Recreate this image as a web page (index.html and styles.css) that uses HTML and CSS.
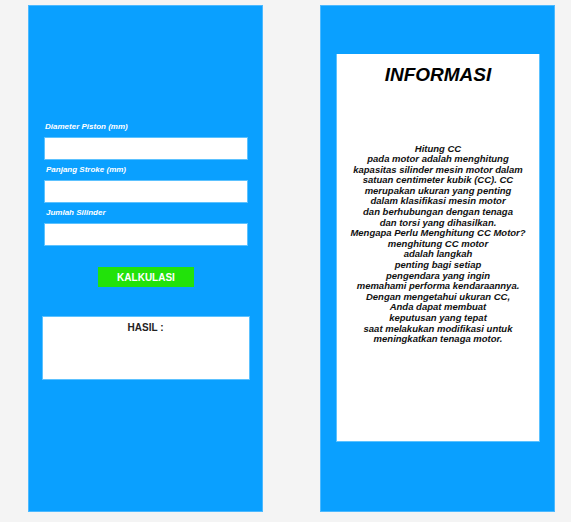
FILE: index.html
```html
<!DOCTYPE html>
<html lang="id">
<head>
<meta charset="utf-8">
<title>Kalkulator CC Motor</title>
<link rel="stylesheet" href="styles.css">
</head>
<body>
<div class="page">
  <section class="panel calc">
    <form class="form">
      <label class="label" for="d">Diameter Piston (mm)</label>
      <input class="field" id="d" type="text">
      <label class="label l2" for="s">Panjang Stroke (mm)</label>
      <input class="field" id="s" type="text">
      <label class="label l3" for="n">Jumlah Silinder</label>
      <input class="field" id="n" type="text">
      <button class="btn" type="button">KALKULASI</button>
    </form>
    <div class="result">
      <div class="result-title">HASIL :</div>
    </div>
  </section>
  <section class="panel info">
    <div class="info-box">
      <h2 class="info-title">INFORMASI</h2>
      <p class="info-text">Hitung CC<br>pada motor adalah menghitung<br>kapasitas silinder mesin motor dalam<br>satuan centimeter kubik (CC). CC<br>merupakan ukuran yang penting<br>dalam klasifikasi mesin motor<br>dan berhubungan dengan tenaga<br>dan torsi yang dihasilkan.<br>Mengapa Perlu Menghitung CC Motor?<br>menghitung CC motor<br>adalah langkah<br>penting bagi setiap<br>pengendara yang ingin<br>memahami performa kendaraannya.<br>Dengan mengetahui ukuran CC,<br>Anda dapat membuat<br>keputusan yang tepat<br>saat melakukan modifikasi untuk<br>meningkatkan tenaga motor.</p>
    </div>
  </section>
</div>
</body>
</html>
```

FILE: styles.css
```css
html, body {
  margin: 0;
  padding: 0;
  background: #f4f4f4;
  font-family: "Liberation Sans", Arial, sans-serif;
}

.page {
  display: flex;
  align-items: flex-start;
  gap: 57px;
  padding: 5px 0 0 28px;
}

.panel {
  box-sizing: border-box;
  width: 235px;
  height: 507px;
  background: #0aa0ff;
  border: 1px solid #4cb9ff;
}

.calc {
  display: flex;
  flex-direction: column;
  align-items: center;
  padding-top: 116px;
}

.form {
  display: flex;
  flex-direction: column;
  width: 204px;
  margin-left: 1px;
}

.label {
  display: block;
  color: #ffffff;
  font-size: 8px;
  font-weight: bold;
  font-style: italic;
  line-height: 10px;
  margin: 0 0 5px 1px;
}

.l2 { margin-left: 2px; }
.l3 { margin-left: 2px; }

.field {
  box-sizing: border-box;
  width: 204px;
  height: 23px;
  margin: 0 0 5px 0;
  padding: 0 4px;
  border: 1px solid #5cc2ff;
  background: #ffffff;
  outline: none;
}

.btn {
  align-self: center;
  width: 96px;
  height: 20px;
  margin-top: 16px;
  padding: 0;
  border: none;
  background: #22e20a;
  color: #ffffff;
  font-family: "Liberation Sans", Arial, sans-serif;
  font-size: 10px;
  font-weight: bold;
}

.result {
  box-sizing: border-box;
  width: 208px;
  height: 64px;
  margin-top: 29px;
  padding-top: 5px;
  background: #ffffff;
  border: 1px solid #5cc2ff;
  text-align: center;
}

.result-title {
  color: #222222;
  font-size: 10px;
  font-weight: bold;
  line-height: 12px;
}

.info {
  padding: 48px 14px 0 15px;
}

.info-box {
  box-sizing: border-box;
  width: 204px;
  height: 388px;
  background: #ffffff;
  border: 1px solid #5cc2ff;
  border-top: none;
  text-align: center;
  padding-top: 10px;
}

.info-title {
  margin: 0;
  font-size: 19px;
  font-weight: bold;
  font-style: italic;
  color: #000000;
  line-height: 22px;
}

.info-text {
  margin: 57.5px 0 0 0;
  font-size: 9.5px;
  font-weight: bold;
  font-style: italic;
  line-height: 10.6px;
  color: #111111;
}
```
